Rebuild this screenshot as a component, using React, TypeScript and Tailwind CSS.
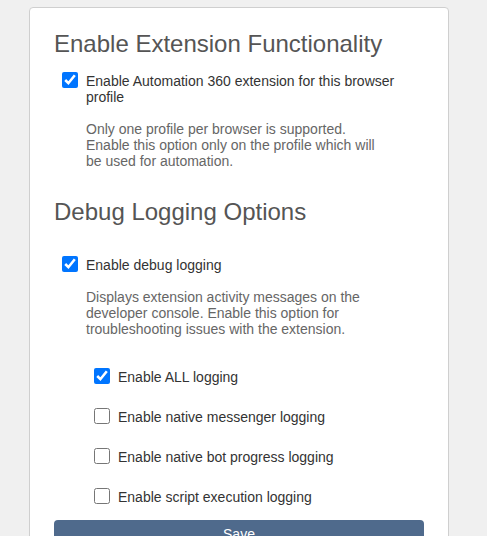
import * as React from "react";

interface Option {
  label: string;
  checked: boolean;
}

const loggingOptions: Option[] = [
  { label: "Enable ALL logging", checked: true },
  { label: "Enable native messenger logging", checked: false },
  { label: "Enable native bot progress logging", checked: false },
  { label: "Enable script execution logging", checked: false },
];

function CheckRow({ label, checked }: Option) {
  return (
    <label className="flex items-start gap-2">
      <input
        type="checkbox"
        defaultChecked={checked}
        className="h-4 w-4 shrink-0"
      />
      <span className="mt-px text-sm leading-4 text-[#333]">{label}</span>
    </label>
  );
}

export default function App() {
  return (
    <div className="min-h-screen bg-[#f0f0f0] pt-[7px] font-['Liberation_Sans',Arial,sans-serif]">
      <div className="ml-[29px] w-[420px] rounded-[4px] border border-[#cfcfcf] bg-white px-6 pt-[22px] pb-6">
        <h2 className="text-[24px] leading-[28px] text-[#555]">
          Enable Extension Functionality
        </h2>
        <div className="mt-[14px] pl-2">
          <CheckRow
            label="Enable Automation 360 extension for this browser profile"
            checked={true}
          />
        </div>
        <p className="mt-4 ml-8 w-[296px] text-sm leading-4 text-[#666]">
          Only one profile per browser is supported. Enable this option only on
          the profile which will be used for automation.
        </p>

        <h2 className="mt-[29px] text-[24px] leading-[28px] text-[#555]">
          Debug Logging Options
        </h2>
        <div className="mt-[30px] pl-2">
          <CheckRow label="Enable debug logging" checked={true} />
        </div>
        <p className="mt-4 ml-8 w-[296px] text-sm leading-4 text-[#666]">
          Displays extension activity messages on the developer console. Enable
          this option for troubleshooting issues with the extension.
        </p>

        <div className="mt-[31px] flex flex-col gap-[23px] pl-10">
          {loggingOptions.map((opt) => (
            <CheckRow key={opt.label} label={opt.label} checked={opt.checked} />
          ))}
        </div>

        <button className="mt-[15px] block w-full rounded-[4px] bg-[#4f6a8c] py-[6px] text-center text-sm leading-4 text-white">
          Save
        </button>
      </div>
    </div>
  );
}
